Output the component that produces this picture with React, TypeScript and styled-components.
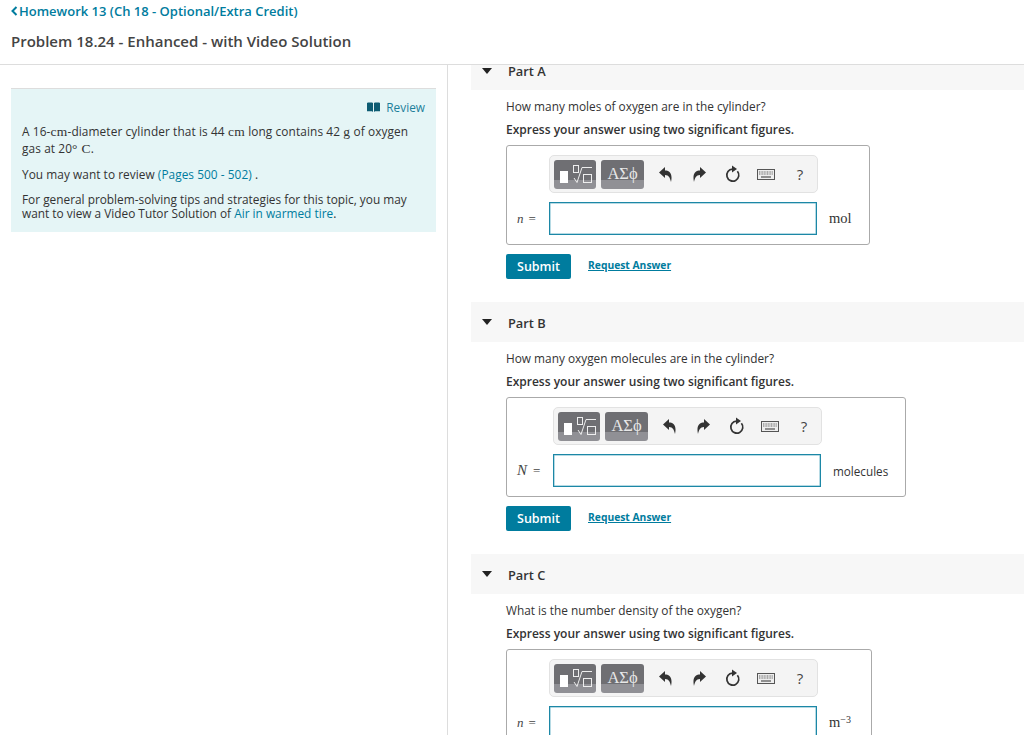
import React from "react";
import styled, { createGlobalStyle } from "styled-components";

const GlobalStyle = createGlobalStyle`
  html, body {
    margin: 0;
    padding: 0;
    background: #fff;
  }
  body {
    font-family: "Open Sans", "Noto Sans", sans-serif;
    color: #333;
  }
`;

const Page = styled.div`
  width: 1024px;
  height: 735px;
  overflow: hidden;
  display: flex;
  flex-direction: column;
`;

const Header = styled.header`
  height: 64px;
  flex: none;
  border-bottom: 1px solid #ddd;
  padding-left: 11px;
`;

const BackLink = styled.a`
  display: flex;
  align-items: center;
  gap: 1px;
  height: 22px;
  font-size: 13px;
  font-weight: 600;
  color: #007c9e;
`;

const Title = styled.h1`
  margin: 9px 0 0;
  font-size: 15px;
  line-height: 20px;
  font-weight: 600;
  color: #444;
`;

const Body = styled.div`
  flex: 1;
  display: flex;
  min-height: 0;
`;

const LeftColumn = styled.aside`
  width: 425px;
  flex: none;
  border-right: 1px solid #ddd;
  padding: 23px 11px 0;
`;

const InfoPanel = styled.section`
  background: #e5f5f6;
  border-top: 1px solid #ddd;
  height: 132px;
  padding: 11px 11px 0;
  font-size: 11.85px;
  line-height: 14px;
  color: #333;
`;

const ReviewRow = styled.div`
  display: flex;
  justify-content: flex-end;
  align-items: center;
  gap: 6px;
  height: 14px;
  color: #1d7f9b;
`;

const InfoText = styled.p<{ $gap: number; $lineHeight?: number; $spacing?: number }>`
  margin: ${(p) => p.$gap}px 0 0;
  line-height: ${(p) => p.$lineHeight ?? 14}px;
  letter-spacing: ${(p) => p.$spacing ?? 0}px;
`;

const InfoLink = styled.span`
  color: #007c9e;
`;

const MathText = styled.span`
  font-family: "Liberation Serif", serif;
  font-size: 13.5px;
  letter-spacing: 0.3px;
`;

const RightColumn = styled.main`
  flex: 1;
  padding-left: 23px;
  min-width: 0;
`;

const PartHeader = styled.div<{ $clipped?: boolean }>`
  height: ${(p) => (p.$clipped ? 25 : 40)}px;
  background: #f7f7f7;
  display: flex;
  align-items: ${(p) => (p.$clipped ? "flex-start" : "center")};
  padding-left: 11px;
  gap: 16px;
`;

const Caret = styled.span<{ $clipped?: boolean }>`
  width: 0;
  height: 0;
  border-left: 5.5px solid transparent;
  border-right: 5.5px solid transparent;
  border-top: 6px solid #222;
  margin-top: ${(p) => (p.$clipped ? "3px" : "0")};
`;

const PartTitle = styled.h2<{ $clipped?: boolean }>`
  margin: ${(p) => (p.$clipped ? 0 : 2)}px 0 0;
  font-size: 12.8px;
  line-height: 13px;
  font-weight: 600;
  color: #333;
`;

const PartContent = styled.div`
  padding: 8px 0 23px 35px;
`;

const Question = styled.p`
  margin: 0;
  font-size: 11.85px;
  line-height: 16px;
`;

const Instruction = styled.p`
  margin: 8px 0 7px;
  font-size: 12px;
  line-height: 16px;
  font-weight: 600;
`;

const AnswerBox = styled.div<{ $width: number; $labelWidth: number }>`
  width: ${(p) => p.$width}px;
  height: 100px;
  box-sizing: border-box;
  border: 1px solid #aaa;
  border-radius: 3px;
  padding: 9px 0 0 10px;
  display: grid;
  grid-template-columns: ${(p) => p.$labelWidth}px 268px 1fr;
  grid-template-rows: 38px 33px;
  row-gap: 9px;
`;

const Toolbar = styled.div`
  grid-column: 2;
  width: 269px;
  box-sizing: border-box;
  background: #f4f4f4;
  border: 1px solid #e2e2e2;
  border-radius: 5px;
  display: flex;
  align-items: center;
  padding-left: 4px;
`;

const TemplateButton = styled.div<{ $width: number }>`
  width: ${(p) => p.$width}px;
  height: 29px;
  margin-right: 5px;
  border-radius: 3px;
  background: linear-gradient(#6f6f73 0 68%, #909095 68% 100%);
  display: flex;
  align-items: center;
  justify-content: center;
  color: #e8e8e8;
  font-family: "Liberation Serif", serif;
  font-size: 16.5px;
  line-height: 26px;
`;

const ToolIcon = styled.div<{ $width: number }>`
  width: ${(p) => p.$width}px;
  display: flex;
  justify-content: center;
  align-items: center;
  color: #333;
`;

const HelpMark = styled.span`
  font-size: 15px;
  color: #444;
`;

const VarLabel = styled.div`
  grid-row: 2;
  display: flex;
  align-items: center;
  font-family: "Liberation Serif", serif;
  font-size: 13px;
  color: #444;
`;

const VarName = styled.i<{ $large?: boolean }>`
  font-size: ${(p) => (p.$large ? 15 : 13)}px;
  margin-right: ${(p) => (p.$large ? 6 : 5)}px;
`;

const AnswerInput = styled.div`
  grid-row: 2;
  box-sizing: border-box;
  border: 1px solid #1c87a6;
  box-shadow: inset 0 0 0 0.5px #6fb6ca;
  background: #fff;
`;

const Unit = styled.div<{ $sans?: boolean }>`
  grid-row: 2;
  display: flex;
  align-items: center;
  padding-left: 12px;
  color: #333;
  font-family: ${(p) => (p.$sans ? '"Open Sans", sans-serif' : '"Liberation Serif", serif')};
  font-size: ${(p) => (p.$sans ? 11.7 : 14.5)}px;
`;

const Sup = styled.sup`
  font-size: 10px;
  line-height: 0;
  margin-top: -6px;
`;

const ActionRow = styled.div`
  display: flex;
  align-items: center;
  gap: 17px;
  margin-top: 9px;
`;

const SubmitButton = styled.button`
  width: 65px;
  height: 25px;
  padding: 0;
  border: none;
  border-radius: 2px;
  background: #007c9e;
  color: #fff;
  font-family: inherit;
  font-size: 12.5px;
  font-weight: 600;
`;

const RequestLink = styled.a`
  font-size: 10.3px;
  font-weight: 700;
  padding-bottom: 3px;
  color: #007c9e;
  text-decoration: underline;
`;

const BookIcon = () => (
  <svg width="13" height="10" viewBox="0 0 13 10">
    <path d="M0 1 L1 .5 H5 L6 1 V10 L5 9.3 H0 Z M7 1 L8 .5 H12 L13 1 V9.3 H8 L7 10 Z" fill="#0d5c73" />
  </svg>
);

const BackChevron = () => (
  <svg width="7" height="10" viewBox="0 0 7 10">
    <path d="M5.5 1 L1.5 5 L5.5 9" fill="none" stroke="#007c9e" strokeWidth="2" />
  </svg>
);

const TemplatesGlyph = () => (
  <svg width="42" height="29" viewBox="0 0 42 29">
    <rect x="6" y="11" width="8" height="12" fill="#fff" />
    <rect x="19.5" y="5.5" width="5" height="7" fill="none" stroke="#eee" />
    <path d="M20 18 L23 22.5 L28 7.5 H38" fill="none" stroke="#eee" />
    <rect x="29.5" y="14.5" width="8" height="8" fill="none" stroke="#eee" />
  </svg>
);

const UndoIcon = () => (
  <svg width="13" height="15" viewBox="0 0 13 15">
    <path d="M0 5.5 L6 0 V3.5 C10 3.5 14 6 12 15 C11 11 10 8 6 8 V11 Z" fill="#333" />
  </svg>
);

const RedoIcon = () => (
  <svg width="13" height="15" viewBox="0 0 13 15">
    <path d="M13 5.5 L7 0 V3.5 C3 3.5 -1 6 1 15 C2 11 3 8 7 8 V11 Z" fill="#333" />
  </svg>
);

const ReloadIcon = () => (
  <svg width="16" height="18" viewBox="0 0 16 18">
    <path d="M12.4 6.2 A6 6 0 1 1 7.5 4.1" fill="none" stroke="#333" strokeWidth="1.7" />
    <path d="M7 0.5 V7.5 L12 4 Z" fill="#333" />
  </svg>
);

const KeyboardIcon = () => (
  <svg width="18" height="11" viewBox="0 0 18 11">
    <rect x=".5" y=".5" width="17" height="10" fill="#eee" stroke="#555" />
    <path d="M2 3 H16 M2 5 H16" stroke="#666" strokeWidth="1.2" strokeDasharray="1 .6" />
    <path d="M4 8 H14" stroke="#666" strokeWidth="1.4" />
  </svg>
);

interface PartProps {
  name: string;
  question: string;
  varName: string;
  unit: React.ReactNode;
  boxWidth: number;
  labelWidth: number;
  clipped?: boolean;
  sansUnit?: boolean;
  largeVar?: boolean;
  noActions?: boolean;
}

const Part: React.FC<PartProps> = ({
  name,
  question,
  varName,
  unit,
  boxWidth,
  labelWidth,
  clipped,
  sansUnit,
  largeVar,
  noActions,
}) => (
  <section>
    <PartHeader $clipped={clipped}>
      <Caret $clipped={clipped} />
      <PartTitle $clipped={clipped}>{name}</PartTitle>
    </PartHeader>
    <PartContent>
      <Question>{question}</Question>
      <Instruction>Express your answer using two significant figures.</Instruction>
      <AnswerBox $width={boxWidth} $labelWidth={labelWidth}>
        <Toolbar>
          <TemplateButton $width={42}>
            <TemplatesGlyph />
          </TemplateButton>
          <TemplateButton $width={43}>ΑΣϕ</TemplateButton>
          <ToolIcon $width={33}>
            <UndoIcon />
          </ToolIcon>
          <ToolIcon $width={34}>
            <RedoIcon />
          </ToolIcon>
          <ToolIcon $width={33}>
            <ReloadIcon />
          </ToolIcon>
          <ToolIcon $width={34}>
            <KeyboardIcon />
          </ToolIcon>
          <ToolIcon $width={34}>
            <HelpMark>?</HelpMark>
          </ToolIcon>
        </Toolbar>
        <VarLabel>
          <VarName $large={largeVar}>{varName}</VarName>=
        </VarLabel>
        <AnswerInput />
        <Unit $sans={sansUnit}>{unit}</Unit>
      </AnswerBox>
      {!noActions && (
        <ActionRow>
          <SubmitButton>Submit</SubmitButton>
          <RequestLink>Request Answer</RequestLink>
        </ActionRow>
      )}
    </PartContent>
  </section>
);

const App: React.FC = () => (
  <Page>
    <GlobalStyle />
    <Header>
      <BackLink>
        <BackChevron />
        Homework 13 (Ch 18 - Optional/Extra Credit)
      </BackLink>
      <Title>Problem 18.24 - Enhanced - with Video Solution</Title>
    </Header>
    <Body>
      <LeftColumn>
        <InfoPanel>
          <ReviewRow>
            <BookIcon />
            Review
          </ReviewRow>
          <InfoText $gap={9} $lineHeight={16} $spacing={0.1}>
            A 16-<MathText>cm</MathText>-diameter cylinder that is 44 <MathText>cm</MathText> long contains 42{" "}
            <MathText>g</MathText> of oxygen
            <br />
            gas at 20<MathText>° C</MathText>.
          </InfoText>
          <InfoText $gap={10} $spacing={0.05}>
            You may want to review <InfoLink>(Pages 500 - 502)</InfoLink> .
          </InfoText>
          <InfoText $gap={11}>
            For general problem-solving tips and strategies for this topic, you may want to view a Video Tutor Solution
            of <InfoLink>Air in warmed tire</InfoLink>.
          </InfoText>
        </InfoPanel>
      </LeftColumn>
      <RightColumn>
        <Part
          clipped
          name="Part A"
          question="How many moles of oxygen are in the cylinder?"
          varName="n"
          unit="mol"
          boxWidth={364}
          labelWidth={32}
        />
        <Part
          name="Part B"
          question="How many oxygen molecules are in the cylinder?"
          varName="N"
          unit="molecules"
          boxWidth={400}
          labelWidth={36}
          sansUnit
          largeVar
        />
        <Part
          noActions
          name="Part C"
          question="What is the number density of the oxygen?"
          varName="n"
          unit={
            <>
              m<Sup>−3</Sup>
            </>
          }
          boxWidth={366}
          labelWidth={32}
        />
      </RightColumn>
    </Body>
  </Page>
);

export default App;
